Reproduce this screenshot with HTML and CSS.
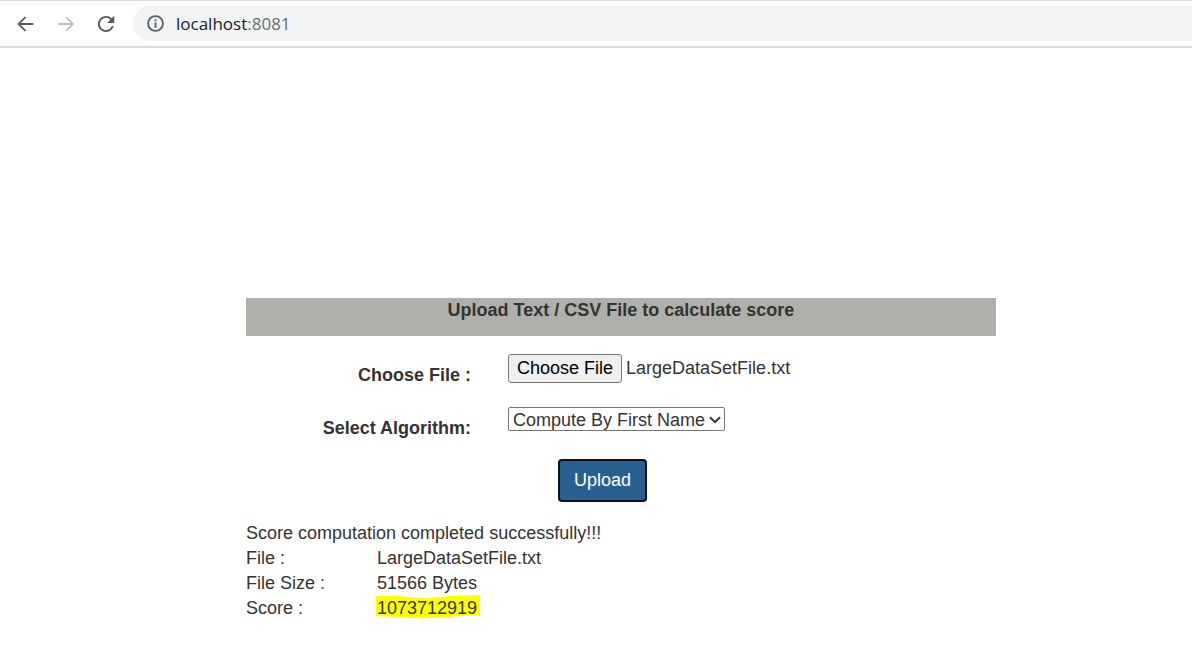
FILE: index.html
```html
<!DOCTYPE html>
<html lang="en">
<head>
<meta charset="utf-8">
<title>Upload File</title>
<link rel="stylesheet" href="styles.css">
</head>
<body>
<header class="toolbar">
  <nav class="nav-buttons" aria-label="Navigation">
    <button class="nav-button" type="button" aria-label="Back"><svg viewBox="0 0 24 24"><path d="M20 11H6.300l5.900-5.900-1.400-1.400L2.500 12l8.300 8.300 1.400-1.400L6.300 13H20z"/></svg></button>
    <button class="nav-button nav-button-off" type="button" aria-label="Forward" disabled><svg viewBox="0 0 24 24"><path d="M3.500 11h13.700l-5.900-5.900 1.400-1.400L21 12l-8.300 8.300-1.400-1.400 5.900-5.900H3.500z"/></svg></button>
    <button class="nav-button" type="button" aria-label="Reload"><svg viewBox="0 0 24 24"><path d="M18.200 5.800A8.800 8.800 0 1 0 20.500 14.200h-2.200A6.700 6.700 0 1 1 12 5.300c1.850 0 3.500.77 4.700 1.980L13.200 10.800H21V3z"/></svg></button>
  </nav>
  <div class="address">
    <svg class="info-icon" viewBox="0 0 16 16"><circle cx="8" cy="8" r="7" fill="none" stroke="currentColor" stroke-width="1.700"/><path d="M7.100 4h1.800v1.800H7.100zM7.100 7h1.800v5H7.100z"/></svg>
    <span class="url">localhost<span class="port">:8081</span></span>
  </div>
</header>
<main class="container">
  <h1 class="title">Upload Text / CSV File to calculate score</h1>
  <form class="form">
    <label class="label" for="file">Choose File :</label>
    <input class="file" id="file" type="file">
    <label class="label" for="algorithm">Select Algorithm:</label>
    <div class="select-box">
      <select class="select" id="algorithm">
        <option>Compute By First Name</option>
      </select>
      <svg class="chevron" viewBox="0 0 12 8"><path d="M1 1.200l5 5 5-5" fill="none" stroke="currentColor" stroke-width="2"/></svg>
    </div>
    <button class="upload" type="button">Upload</button>
  </form>
  <section class="result">
    <p class="message">Score computation completed successfully!!!</p>
    <dl class="details">
      <dt>File :</dt><dd>LargeDataSetFile.txt</dd>
      <dt>File Size :</dt><dd>51566 Bytes</dd>
      <dt>Score :</dt><dd><span class="score">1073712919<svg class="marker" viewBox="0 0 104 24" preserveAspectRatio="none"><path d="M0 1H24Q50 5 72 1L104 0V20L84 21Q50 25 20 22L0 21z"/></svg></span></dd>
    </dl>
  </section>
</main>
<script src="script.js"></script>
</body>
</html>
```
FILE: styles.css
```css
* {
  box-sizing: border-box;
}

body {
  margin: 0;
  background: #fff;
  color: #333;
  font: 18px/25px "Liberation Sans", Arial, sans-serif;
}

.toolbar {
  display: flex;
  align-items: center;
  height: 48px;
  padding-left: 15px;
  border-top: 1px solid #dcdddf;
  border-bottom: 2px solid #dadbdd;
}

.nav-buttons {
  display: flex;
  gap: 18px;
  margin-right: 16px;
}

.nav-button {
  width: 22px;
  height: 22px;
  padding: 0;
  border: 0;
  background: none;
  color: #55585c;
}

.nav-button svg {
  display: block;
  width: 22px;
  height: 22px;
  fill: currentColor;
}

.nav-button-off {
  color: #babcbe;
}

.address {
  display: flex;
  flex: 1;
  align-items: center;
  gap: 12px;
  height: 35px;
  padding-left: 14px;
  border-radius: 18px 0 0 18px;
  background: #f1f3f4;
}

.info-icon {
  width: 17px;
  height: 17px;
  color: #5f6368;
  fill: currentColor;
}

.url {
  color: #202124;
  font-family: "Open Sans", "Noto Sans", sans-serif;
  font-size: 17px;
}

.port {
  color: #6b6f73;
}

.container {
  width: calc(100% - 100px);
  max-width: 800px;
  margin: 250px auto 0;
  padding-left: 50px;
}

.title {
  min-height: 38px;
  margin: 0;
  background: #b0b0aa;
  font-size: 18px;
  line-height: 25px;
  text-align: center;
}

.form {
  display: grid;
  grid-template-columns: 30% 1fr;
  grid-template-rows: 53px 52px auto;
  column-gap: 37px;
  align-items: start;
  padding-top: 18px;
}

.label {
  padding-top: 9px;
  font-weight: bold;
  text-align: right;
}

.file {
  font: inherit;
  line-height: 25px;
}

.file::file-selector-button {
  height: 29px;
  padding: 0 8px;
  border: 1px solid #767676;
  border-radius: 3px;
  background: #efefef;
  color: #000;
  font: inherit;
}

.select-box {
  position: relative;
  justify-self: start;
  height: 24px;
}

.select {
  display: block;
  height: 24px;
  padding: 0 18px 0 4px;
  border: 1px solid #767676;
  border-radius: 2px;
  appearance: none;
  background: #fff;
  color: #333;
  font: inherit;
}

.chevron {
  position: absolute;
  top: 9px;
  right: 4px;
  width: 12px;
  height: 8px;
  pointer-events: none;
}

.upload {
  grid-column: 2;
  justify-self: start;
  height: 43px;
  margin-left: 50px;
  padding: 0 14px;
  border: 2px solid #06121f;
  border-radius: 4px;
  background: #286090;
  color: #fff;
  font: inherit;
}

.result {
  padding-top: 19px;
}

.message,
.details,
.details dd {
  margin: 0;
}

.details {
  display: grid;
  grid-template-columns: 131px 1fr;
}

.score {
  position: relative;
  z-index: 0;
}

.marker {
  position: absolute;
  z-index: -1;
  top: -3px;
  left: -1px;
  width: 104px;
  height: 24px;
  fill: #ff0;
}
```
FILE: script.js
```js
const selection = new DataTransfer();
selection.items.add(new File([new Uint8Array(51566)], "LargeDataSetFile.txt", { type: "text/plain" }));
document.getElementById("file").files = selection.files;
```
